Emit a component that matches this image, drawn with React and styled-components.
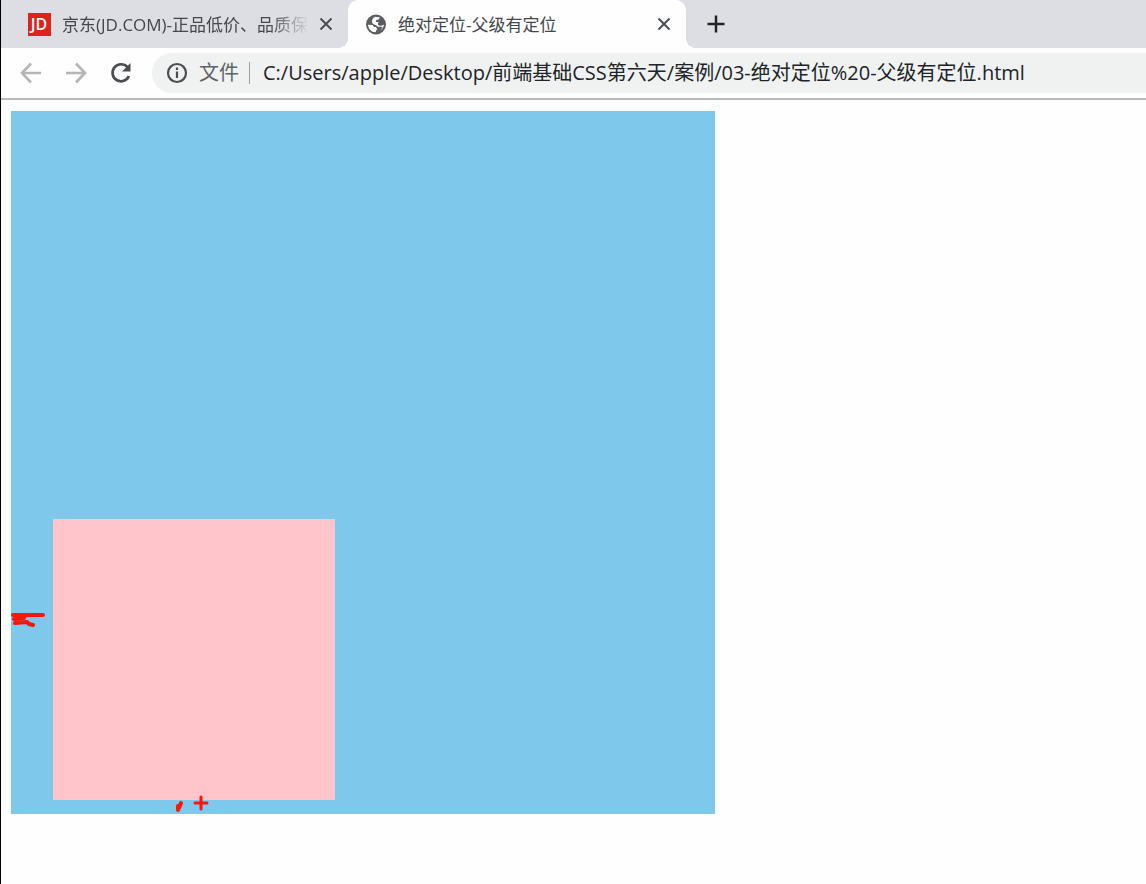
import React from "react";
import styled, { createGlobalStyle } from "styled-components";

const GlobalStyle = createGlobalStyle`
  * { box-sizing: border-box; }
  body {
    margin: 0;
    background: #fdfefd;
    font-family: "Open Sans", "Noto Sans CJK SC", sans-serif;
  }
  button, input { font-family: inherit; }
`;

const Window = styled.div`
  min-height: 100vh;
  border-left: 1px solid #000;
`;

const TabStrip = styled.div`
  display: flex;
  height: 48px;
  background: #dcdee3;
`;

const Tab = styled.div`
  position: relative;
  display: flex;
  align-items: center;
  width: ${(p) => (p.$active ? 338 : 347)}px;
  padding: 0 13px 0 ${(p) => (p.$active ? 16 : 27)}px;
  border-radius: 10px 10px 0 0;
  background: ${(p) => (p.$active ? "#fdfefd" : "transparent")};

  &::before, &::after {
    content: ${(p) => (p.$active ? '""' : "none")};
    position: absolute;
    bottom: 0;
    width: 10px;
    height: 10px;
  }
  &::before {
    right: 100%;
    background: radial-gradient(circle at 0 0, transparent 10px, #fdfefd 10px);
  }
  &::after {
    left: 100%;
    background: radial-gradient(circle at 100% 0, transparent 10px, #fdfefd 10px);
  }
`;

const TabTitle = styled.button`
  display: flex;
  align-items: center;
  flex: 1;
  min-width: 0;
  gap: 11px;
  padding: 0;
  border: 0;
  background: none;
  color: #44474b;
  font-size: 17px;
  line-height: 24px;
  text-align: left;
`;

const TitleText = styled.span`
  flex: 1;
  padding-top: 1px;
  white-space: nowrap;
  mask-image: ${(p) => (p.$fade ? "linear-gradient(to left, transparent 8px, #000 48px)" : "none")};
`;

const IconButton = styled.button`
  display: grid;
  place-items: center;
  flex: none;
  width: ${(p) => p.$size}px;
  height: ${(p) => p.$size}px;
  padding: 0;
  border: 0;
  background: none;
  color: ${(p) => p.$color || "#4a4d51"};
`;

const NewTab = styled(IconButton)`
  align-self: center;
  margin-left: 18px;
`;

const Glyph = styled.svg`
  flex: none;
  fill: none;
  stroke: currentColor;
`;

const Toolbar = styled.div`
  display: flex;
  align-items: center;
  height: 52px;
  padding-left: 17px;
  border-bottom: 2px solid #b9bab9;
`;

const Navigation = styled.div`
  display: flex;
  gap: 19px;
  margin-right: 18px;
`;

const AddressBar = styled.label`
  display: flex;
  align-items: center;
  flex: 1;
  min-width: 0;
  height: 40px;
  padding-left: 12px;
  border-radius: 20px 0 0 20px;
  background: #f0f2f2;
  color: #5f6368;
  font-size: 20px;
  line-height: 28px;
`;

const Scheme = styled.span`
  padding: 0 10px 0 9px;
  white-space: nowrap;
`;

const Divider = styled.span`
  width: 1px;
  height: 22px;
  background: #9a9c9e;
`;

const Address = styled.input`
  flex: 1;
  min-width: 0;
  padding: 0 0 0 13px;
  border: 0;
  outline: 0;
  background: none;
  color: #202327;
  font-size: 20px;
  line-height: 28px;
`;

const Page = styled.main`
  padding: 11px 10px;
`;

const Father = styled.div`
  position: relative;
  display: flex;
  align-items: flex-end;
  width: 704px;
  height: 703px;
  padding: 0 0 14px 42px;
  background: #7ec8ec;
`;

const Son = styled.div`
  width: 282px;
  height: 281px;
  background: #ffc5ca;
`;

const Ink = styled.svg`
  position: absolute;
  inset: 0;
  width: 100%;
  height: 100%;
  fill: none;
  stroke: #fb1505;
  stroke-linecap: round;
  stroke-linejoin: round;
`;

const Logo = styled.svg`
  flex: none;
  text {
    fill: #fff;
    font: 600 16px "Open Sans", sans-serif;
    text-anchor: middle;
  }
`;

function JdLogo() {
  return (
    <Logo width="23" height="23" viewBox="0 0 23 23" aria-hidden="true">
      <rect width="23" height="23" fill="#dc241c" />
      <text x="11" y="17">JD</text>
    </Logo>
  );
}

function GlobeIcon() {
  return (
    <Glyph width="23" height="23" viewBox="0 0 23 23" aria-hidden="true">
      <circle cx="12" cy="11.500" r="10" fill="#5a5e62" stroke="none" />
      <path
        d="M11.500 3.800L16 4.500L14.500 6.500L12 7.200V9H15L16 11L20 11.500C19.800 13.500 18.500 15.800 17 17L14 18.500L13.500 16.500L14.500 14.500L12.500 12.500L9 11L8 9C8 6.500 9 4.500 11.500 3.800Z"
        fill="#fdfefd"
        stroke="none"
      />
      <path d="M14 9.500L19 7L20 11.500L17 13L14 12Z" fill="#5a5e62" stroke="none" />
      <path d="M4 11.800L8.500 12L10 14H12L13 16L11.500 19.300C7.500 19.300 4.200 16 4 11.800Z" fill="#fdfefd" stroke="none" />
      <path d="M14.500 13.500L18.500 14L16.500 18L12.500 19.500L13.500 16.500Z" fill="#5a5e62" stroke="none" />
    </Glyph>
  );
}

function CloseIcon() {
  return (
    <Glyph width="18" height="18" viewBox="0 0 18 18" strokeWidth="2" aria-hidden="true">
      <path d="M3.500 3.500L14.500 14.500M14.500 3.500L3.500 14.500" />
    </Glyph>
  );
}

function PlusIcon() {
  return (
    <Glyph width="24" height="24" viewBox="0 0 24 24" strokeWidth="2.500" aria-hidden="true">
      <path d="M3.500 12H20.500M12 3.500V20.500" />
    </Glyph>
  );
}

function BackIcon() {
  return (
    <Glyph width="26" height="26" viewBox="0 0 26 26" strokeWidth="2.600" aria-hidden="true">
      <path d="M23 13H4.500M13 3.500L4 13L13 22.500" />
    </Glyph>
  );
}

function ForwardIcon() {
  return (
    <Glyph width="26" height="26" viewBox="0 0 26 26" strokeWidth="2.600" aria-hidden="true">
      <path d="M3 13H21.500M13 3.500L22 13L13 22.500" />
    </Glyph>
  );
}

function ReloadIcon() {
  return (
    <Glyph width="26" height="26" viewBox="0 0 26 26" strokeWidth="2.700" aria-hidden="true">
      <path d="M19.400 7.100A8.500 8.500 0 1 0 20.900 16" />
      <path d="M22.500 3V11.500H14Z" fill="currentColor" stroke="none" />
    </Glyph>
  );
}

function InfoIcon() {
  return (
    <Glyph width="26" height="26" viewBox="0 0 26 26" strokeWidth="2.200" color="#4a4d51" aria-hidden="true">
      <circle cx="13" cy="13" r="9" />
      <path d="M13 11.500V18M13 7.500V10" />
    </Glyph>
  );
}

export default function App() {
  return (
    <>
      <GlobalStyle />
      <Window>
        <TabStrip>
          <Tab>
            <TabTitle>
              <JdLogo />
              <TitleText $fade>京东(JD.COM)-正品低价、品质保</TitleText>
            </TabTitle>
            <IconButton $size={18} aria-label="关闭"><CloseIcon /></IconButton>
          </Tab>
          <Tab $active>
            <TabTitle>
              <GlobeIcon />
              <TitleText>绝对定位-父级有定位</TitleText>
            </TabTitle>
            <IconButton $size={18} aria-label="关闭"><CloseIcon /></IconButton>
          </Tab>
          <NewTab $size={24} $color="#222426" aria-label="新标签页"><PlusIcon /></NewTab>
        </TabStrip>
        <Toolbar>
          <Navigation>
            <IconButton $size={26} $color="#b4b6b7" aria-label="后退"><BackIcon /></IconButton>
            <IconButton $size={26} $color="#b4b6b7" aria-label="前进"><ForwardIcon /></IconButton>
            <IconButton $size={26} aria-label="重新加载"><ReloadIcon /></IconButton>
          </Navigation>
          <AddressBar>
            <InfoIcon />
            <Scheme>文件</Scheme>
            <Divider />
            <Address type="text" aria-label="地址" defaultValue="C:/Users/apple/Desktop/前端基础CSS第六天/案例/03-绝对定位%20-父级有定位.html" />
          </AddressBar>
        </Toolbar>
        <Page>
          <Father>
            <Son />
            <Ink viewBox="0 0 704 703" aria-hidden="true">
              <path d="M2 504H32" strokeWidth="4" />
              <path d="M13 507L3 508M4 512L16 511L18 513L22 514" strokeWidth="4" />
              <path d="M170 692L168 697M167 695V699" strokeWidth="4" />
              <path d="M184 692H196M190 686V698" strokeWidth="3" />
            </Ink>
          </Father>
        </Page>
      </Window>
    </>
  );
}
